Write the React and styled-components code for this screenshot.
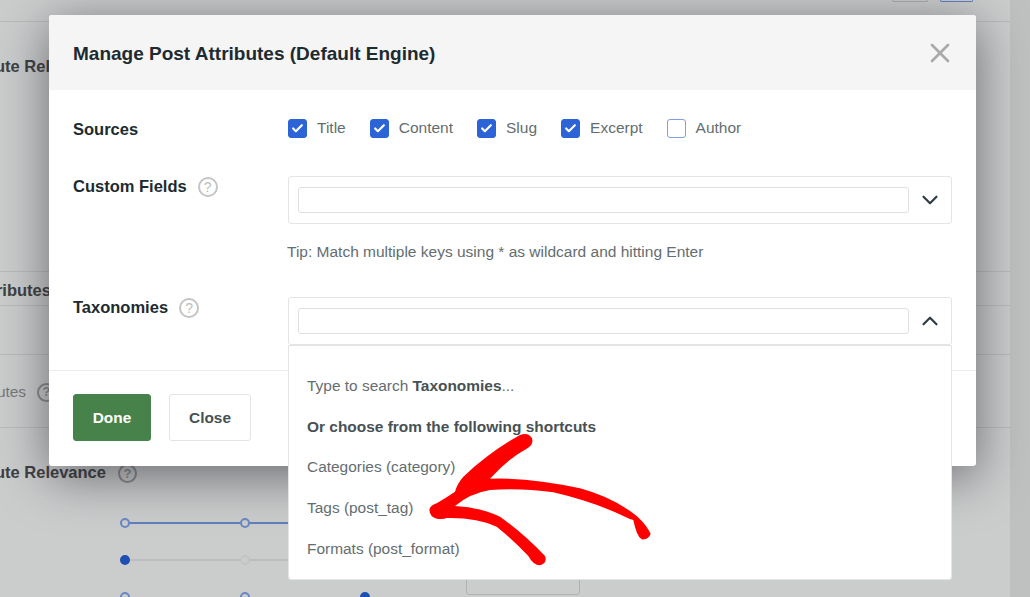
import React from "react";
import styled, {createGlobalStyle} from "styled-components";
import {Check, ChevronDown, ChevronUp, X} from "lucide-react";

const GlobalStyle = createGlobalStyle`
  html, body {
    margin: 0;
    padding: 0;
    background: #bfc0c0;
  }
  * {
    box-sizing: border-box;
  }
  body {
    font-family: "Liberation Sans", Arial, sans-serif;
  }
`

const Page = styled.div`
  position: relative;
  width: 1030px;
  height: 597px;
  overflow: hidden;
  background: #bfc0c0;
`

/* the settings page sitting behind the modal */
const Behind = styled.div`
  width: 1010px;
  height: 597px;
  background: #cbcccc;
  color: #3d4043;
`

const TopBar = styled.div`
  height: 22px;
  border-bottom: 1px solid #b9baba;
  display: flex;
  justify-content: flex-end;
  gap: 12px;
  padding-right: 37px;
`

const TopButton = styled.div`
  width: ${p => p.$width}px;
  height: 2px;
  border: 1px solid ${p => p.$color};
  border-top: 0;
  border-radius: 0 0 3px 3px;
`

const Section = styled.div`
  height: ${p => p.$height}px;
  padding-top: ${p => p.$top || 0}px;
  border-bottom: ${p => p.$line ? "1px solid #b9baba" : "0"};
`

const BehindTitle = styled.div`
  display: flex;
  align-items: center;
  gap: 12px;
  margin-left: ${p => p.$shift}px;
  font-size: 16.5px;
  font-weight: 700;
  line-height: 20px;
`

const BehindSub = styled(BehindTitle)`
  gap: 11px;
  font-size: 15.4px;
  font-weight: 400;
  color: #76787a;
`

const BehindHelp = styled.span`
  width: 19px;
  height: 19px;
  margin-top: ${p => p.$drop || 0}px;
  border-radius: 50%;
  border: 2px solid #8a8b8d;
  color: #8a8b8d;
  font-size: 13px;
  font-weight: 700;
  display: flex;
  align-items: center;
  justify-content: center;
`

const Sliders = styled.div`
  display: flex;
  gap: 16px;
  padding: 35px 0 0 120px;
`

const Tracks = styled.div`
  display: flex;
  flex-direction: column;
  gap: 27px;
`

const TRACK_COLORS = {
    active: "#5f7fbe",
    idle: "#bcbdbd",
    none: "transparent",
}

const Track = styled.div`
  width: 330px;
  height: 10px;
  display: flex;
  gap: 110px;
  background: linear-gradient(${p => TRACK_COLORS[p.$line]}, ${p => TRACK_COLORS[p.$line]}) center / 100% 2px no-repeat;
`

const Dot = styled.span`
  width: 10px;
  height: 10px;
  border-radius: 50%;
  background: ${p => p.$on ? "#1d4fb4" : "#cbcccc"};
  border: 2px solid ${p => p.$on ? "#1d4fb4" : p.$muted ? "#c2c3c3" : "#6a88c4"};
`

const BehindButton = styled.div`
  width: 114px;
  height: 40px;
  margin-top: 37px;
  border: 1px solid #b0b1b1;
  border-radius: 3px;
`

const Modal = styled.div`
  position: absolute;
  left: 49px;
  top: 15px;
  width: 927px;
  height: 451px;
  background: #fff;
  border-radius: 3px;
  box-shadow: 0 10px 50px rgba(30, 30, 40, 0.56);
  display: flex;
  flex-direction: column;
`

const ModalHeader = styled.div`
  height: 75px;
  background: #f5f5f5;
  border-radius: 3px 3px 0 0;
  padding: 0 24px;
  display: flex;
  align-items: center;
  justify-content: space-between;
`

const ModalTitle = styled.h2`
  margin: 2px 0 0;
  font-size: 19px;
  font-weight: 700;
  color: #1d2b30;
`

const CloseIcon = styled(X)`
  color: #a9a9a9;
  margin-right: -4px;
`

const ModalBody = styled.div`
  flex: 1;
  padding: 29px 24px 0;
`

const Row = styled.div`
  display: grid;
  grid-template-columns: 215px 1fr;
  margin-top: ${p => p.$top || 0}px;
`

const Label = styled.div`
  display: flex;
  align-items: flex-start;
  gap: 11px;
  font-size: 16.5px;
  font-weight: 700;
  line-height: 20px;
  color: #1d2b30;
`

const Help = styled.span`
  width: 20px;
  height: 20px;
  margin-top: 1px;
  border-radius: 50%;
  border: 2px solid #c4c4c4;
  color: #bcbcbc;
  font-size: 14px;
  font-weight: 400;
  display: flex;
  align-items: center;
  justify-content: center;
`

const Checks = styled.div`
  display: flex;
  gap: 24px;
`

const CheckItem = styled.div`
  display: flex;
  align-items: flex-start;
  gap: 10px;
  font-size: 15.5px;
  line-height: 17px;
  color: #646d70;
`

const Box = styled.span`
  width: 19px;
  height: 19px;
  border-radius: 3px;
  background: ${p => p.$checked ? "#2c63d6" : "#fff"};
  border: 1px solid ${p => p.$checked ? "#2c63d6" : "#7f9fe6"};
  color: #fff;
  display: flex;
  align-items: center;
  justify-content: center;
`

const SelectWrap = styled.div`
  position: relative;
`

const Select = styled.div`
  height: 48px;
  border: 1px solid #e4e4e4;
  border-radius: 3px;
  padding-left: 9px;
  display: flex;
  align-items: center;
  color: #2c3c44;
`

const SelectInput = styled.input`
  flex: 1;
  height: 26px;
  border: 1px solid #e0e0e0;
  border-radius: 3px;
  background: #fff;
`

const Caret = styled.span`
  width: 42px;
  display: flex;
  justify-content: center;
`

const Tip = styled.div`
  grid-column: 2;
  margin-top: 18px;
  margin-left: -1px;
  font-size: 15.5px;
  line-height: 20px;
  color: #646d70;
`

const Dropdown = styled.div`
  position: absolute;
  left: 0;
  right: 0;
  top: 48px;
  height: 235px;
  background: #fff;
  border: 1px solid #e4e4e4;
  border-radius: 0 0 3px 3px;
  padding: 30px 18px 0;
  display: flex;
  flex-direction: column;
  gap: 20.7px;
  z-index: 2;
  font-size: 15.45px;
  line-height: 20px;
  color: #646d70;
`

const DropdownItem = styled.div`
  font-weight: ${p => p.$bold ? 700 : 400};
  color: ${p => p.$bold ? "#475154" : "#646d70"};
`

const Strong = styled.strong`
  color: #475154;
`

const ModalFooter = styled.div`
  border-top: 1px solid #ececec;
  padding: 23px 24px 25px;
  display: flex;
  gap: 18px;
`

const Button = styled.button`
  height: 47px;
  width: ${p => p.$primary ? 78 : 82}px;
  border-radius: 3px;
  border: 1px solid ${p => p.$primary ? "#47824a" : "#e4e4e4"};
  background: ${p => p.$primary ? "#47824a" : "#fff"};
  color: ${p => p.$primary ? "#fff" : "#475154"};
  font-family: inherit;
  font-size: 15.4px;
  font-weight: 700;
`

const Arrow = styled.svg`
  position: absolute;
  left: 380px;
  top: 420px;
  width: 300px;
  height: 177px;
  z-index: 3;
`

const SOURCES = [
    {name: "Title", checked: true},
    {name: "Content", checked: true},
    {name: "Slug", checked: true},
    {name: "Excerpt", checked: true},
    {name: "Author", checked: false},
]

const SHORTCUTS = ["Categories (category)", "Tags (post_tag)", "Formats (post_format)"]

function App() {
    return (
        <Page>
            <GlobalStyle/>
            <Behind>
                <TopBar>
                    <TopButton $width={36} $color="#a9aaaa"/>
                    <TopButton $width={33} $color="#5f7fbe"/>
                </TopBar>
                <Section $height={250} $top={34} $line>
                    <BehindTitle $shift={-49}>Attribute Relevance</BehindTitle>
                </Section>
                <Section $height={34} $top={8} $line>
                    <BehindTitle $shift={-27}>Attributes</BehindTitle>
                </Section>
                <Section $height={49} $line/>
                <Section $height={73} $top={27} $line>
                    <BehindSub $shift={-39}>Attributes <BehindHelp>?</BehindHelp></BehindSub>
                </Section>
                <Section $height={169} $top={32}>
                    <BehindTitle $shift={-49}>Attribute Relevance <BehindHelp $drop={4}>?</BehindHelp></BehindTitle>
                    <Sliders>
                        <Tracks>
                            <Track $line="active">
                                <Dot/><Dot/><Dot/>
                            </Track>
                            <Track $line="idle">
                                <Dot $on/><Dot $muted/><Dot $muted/>
                            </Track>
                            <Track $line="none">
                                <Dot/><Dot/><Dot $on/>
                            </Track>
                        </Tracks>
                        <BehindButton/>
                    </Sliders>
                </Section>
            </Behind>

            <Modal>
                <ModalHeader>
                    <ModalTitle>Manage Post Attributes (Default Engine)</ModalTitle>
                    <CloseIcon size={32} strokeWidth={2}/>
                </ModalHeader>
                <ModalBody>
                    <Row>
                        <Label>Sources</Label>
                        <Checks>
                            {SOURCES.map(source => (
                                <CheckItem key={source.name}>
                                    <Box $checked={source.checked}>
                                        {source.checked && <Check size={13} strokeWidth={4}/>}
                                    </Box>
                                    {source.name}
                                </CheckItem>
                            ))}
                        </Checks>
                    </Row>
                    <Row $top={37}>
                        <Label>Custom Fields <Help>?</Help></Label>
                        <Select>
                            <SelectInput/>
                            <Caret><ChevronDown size={26} strokeWidth={2}/></Caret>
                        </Select>
                        <Tip>Tip: Match multiple keys using * as wildcard and hitting Enter</Tip>
                    </Row>
                    <Row $top={35}>
                        <Label>Taxonomies <Help>?</Help></Label>
                        <SelectWrap>
                            <Select>
                                <SelectInput/>
                                <Caret><ChevronUp size={26} strokeWidth={2}/></Caret>
                            </Select>
                            <Dropdown>
                                <DropdownItem>Type to search <Strong>Taxonomies</Strong>...</DropdownItem>
                                <DropdownItem $bold>Or choose from the following shortcuts</DropdownItem>
                                {SHORTCUTS.map(item => <DropdownItem key={item}>{item}</DropdownItem>)}
                            </Dropdown>
                        </SelectWrap>
                    </Row>
                </ModalBody>
                <ModalFooter>
                    <Button $primary>Done</Button>
                    <Button>Close</Button>
                </ModalFooter>
            </Modal>

            <Arrow viewBox="0 0 900 531" aria-hidden="true">
                <path
                    fill="#ff0000"
                    d="M148 270 Q150 256 170 250 Q200 232 225 215 Q232 190 250 170 Q330 95 420 45 Q445 36 456 55 Q462 75 440 86 Q385 115 330 176 Q450 172 600 205 Q700 232 770 288 Q800 315 812 342 Q805 360 785 358 Q770 350 760 300 Q750 298 735 290 Q640 245 520 217 Q420 203 330 210 Q270 220 225 258 Q300 262 360 290 Q430 340 495 408 Q503 428 480 436 Q460 436 445 408 Q400 360 350 320 Q290 292 200 294 Q190 298 170 296 Q150 292 148 270 Z"
                />
            </Arrow>
        </Page>
    )
}

export default App
